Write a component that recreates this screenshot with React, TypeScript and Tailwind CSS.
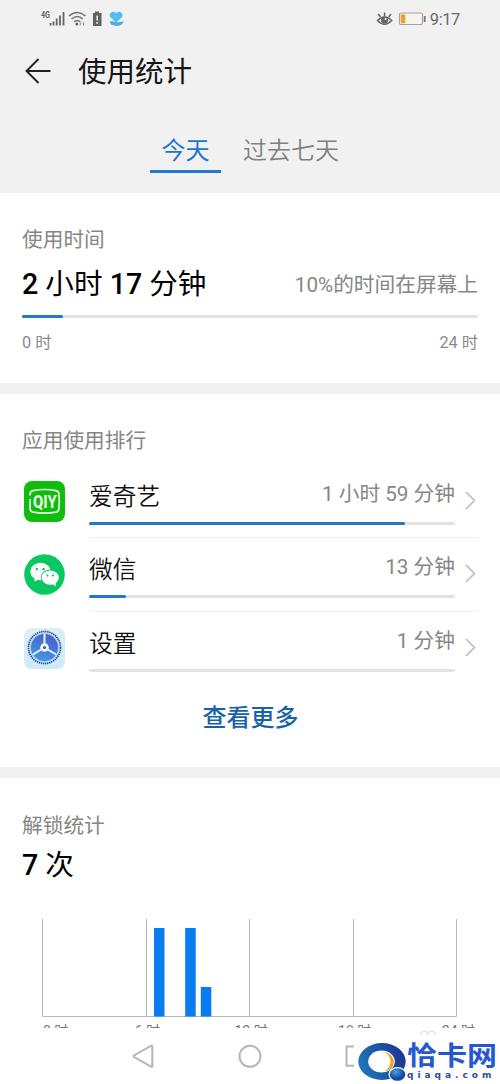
import type { ReactNode } from 'react';

interface AppUsage {
  name: string;
  time: string;
  percent: number;
  icon: ReactNode;
}

function QiyiIcon() {
  return (
    <svg width="41" height="41" viewBox="0 0 41 41">
      <rect width="41" height="41" rx="8" fill="#0fbe0c" />
      <path
        d="M9 9.6Q20.500 7.400 32 9.600Q34.600 10.200 34.900 12.800Q35.600 20.500 34.900 28Q34.600 30.600 32 31.200Q20.500 33 9 31.200Q6.400 30.600 6.100 28V18M6.100 14.500V12.800Q6.400 10.200 9 9.600"
        fill="none"
        stroke="#e9ffe6"
        strokeWidth="1.700"
      />
      <text
        x="20.800"
        y="26.500"
        textAnchor="middle"
        textLength="23.500"
        lengthAdjust="spacingAndGlyphs"
        fill="#f4fff2"
        fontSize="17.500"
        fontWeight="700"
        fontFamily="Roboto, sans-serif"
      >
        QIY
      </text>
    </svg>
  );
}

function WechatIcon() {
  return (
    <svg width="41" height="41" viewBox="0 0 41 41">
      <circle cx="20.500" cy="20.500" r="20.300" fill="#09c862" />
      <ellipse cx="16.500" cy="17.500" rx="10.200" ry="8.700" fill="#fff" />
      <path d="M10.500 22.500L10.500 27.700L15.500 24.800Z" fill="#fff" />
      <ellipse cx="26.200" cy="23.600" rx="9.500" ry="8.200" fill="#09c862" />
      <ellipse cx="26.200" cy="23.600" rx="8.600" ry="7.200" fill="#fff" />
      <path d="M27.500 29.500L31.800 32.400L31.500 27.500Z" fill="#fff" />
      <circle cx="12.900" cy="15" r="1.300" fill="#09c862" />
      <circle cx="19.600" cy="15" r="1.300" fill="#09c862" />
      <circle cx="23.400" cy="21.500" r="1.100" fill="#09c862" />
      <circle cx="29" cy="21.500" r="1.100" fill="#09c862" />
    </svg>
  );
}

function SettingsIcon() {
  return (
    <svg width="41" height="41" viewBox="0 0 41 41">
      <defs>
        <linearGradient id="settings-bg" x1="0" y1="0" x2="0" y2="1">
          <stop offset="0" stopColor="#daeff8" />
          <stop offset="1" stopColor="#cdeafa" />
        </linearGradient>
        <linearGradient id="settings-dial" x1="0.700" y1="0" x2="0.300" y2="1">
          <stop offset="0" stopColor="#4a5bd0" />
          <stop offset="1" stopColor="#3f9be0" />
        </linearGradient>
      </defs>
      <rect width="41" height="41" rx="8" fill="url(#settings-bg)" />
      <circle cx="20.500" cy="19.500" r="16" fill="none" stroke="#35507e" strokeWidth="1.800" strokeDasharray="1.400 0.700" />
      <circle cx="20.500" cy="19.500" r="14.800" fill="#a9cdf5" />
      <circle cx="20.500" cy="19.500" r="13.500" fill="url(#settings-dial)" />
      <path d="M20.500 6V19.500L9 26.500M20.500 19.500L32 26.500" fill="none" stroke="#eaf5ff" strokeWidth="2" />
      <circle cx="20.500" cy="19.500" r="4.300" fill="#eaf5ff" />
      <circle cx="20.500" cy="19.500" r="1.600" fill="#4c6076" />
    </svg>
  );
}

const apps: AppUsage[] = [
  { name: '爱奇艺', time: '1 小时 59 分钟', percent: 86.3, icon: <QiyiIcon /> },
  { name: '微信', time: '13 分钟', percent: 10, icon: <WechatIcon /> },
  { name: '设置', time: '1 分钟', percent: 0, icon: <SettingsIcon /> },
];

// unlock counts: x offset from the left axis and bar height
const unlocks = [
  { x: 112, height: 88.5 },
  { x: 143.2, height: 88.5 },
  { x: 158.8, height: 29.5 },
];

const hours = ['6 时', '12 时', '18 时', '24 时'];

function StatusBar() {
  return (
    <div className="flex h-[38px] items-center justify-between pr-10 pl-10 text-[#6b6b6b]">
      <svg width="86" height="20" viewBox="0 0 86 20">
        <text x="1" y="9" fontSize="8.500" fontWeight="700" fontFamily="Roboto, sans-serif" fill="#666" textLength="9" lengthAdjust="spacingAndGlyphs">
          4G
        </text>
        <path d="M10.500 14V16.500M13.500 12.500V16.500M16.700 9.500V16.500M20 6.500V16.500M23.500 3V16.500" stroke="#666" strokeWidth="1.800" />
        <g fill="none" stroke="#707070" strokeWidth="1.600">
          <path d="M29 7Q37.200 0 45.500 7" />
          <path d="M31.700 10Q37.200 5 42.700 10" />
          <path d="M34.200 12.800Q37.200 10.200 40.200 12.800" />
        </g>
        <circle cx="36.800" cy="15" r="1.500" fill="#666" />
        <path d="M41 13.500L40 16.500M43.500 13.500V16.500" stroke="#888" strokeWidth="1" />
        <path d="M55 2.500H59V4H61.500V17H53V4H55Z" fill="#626262" />
        <path d="M57.200 6.500V11.500M57.200 13V14.800" stroke="#f1f1f1" strokeWidth="1.600" />
        <path d="M76.300 13.500L70.500 8.500C68.300 5.200 71.500 2 74.500 2.900L76.300 4.100L78 2.900C81 2 84 5.200 81.700 8.500Z" fill="#56bdf2" />
        <path d="M69.500 12.500Q74 11.500 76.500 13.200L84 12.500Q82 17 76 17L71 15.500Z" fill="#4dade9" />
      </svg>
      <div className="flex items-center">
        <svg width="50" height="18" viewBox="0 0 50 18" className="mr-[4px]">
          <path d="M1.500 10.500Q8.500 3.500 15.700 10.500Q8.500 18 1.500 10.500Z" fill="none" stroke="#656565" strokeWidth="1.500" />
          <circle cx="8.600" cy="10" r="3.600" fill="#656565" />
          <circle cx="9.600" cy="9" r="1" fill="#f1f1f1" />
          <path d="M8.600 6V2.500M4.500 7L2.300 4M12.700 7L15 4" stroke="#656565" strokeWidth="1.500" />
          <rect x="23.500" y="3" width="23" height="11.500" rx="1.500" fill="#f7f4f0" stroke="#a7a29d" strokeWidth="1.200" />
          <rect x="24.800" y="4.400" width="4.500" height="8.800" fill="#f0a02e" />
          <path d="M48.700 6V12" stroke="#777" strokeWidth="1.800" />
        </svg>
        <span className="pt-px text-[16.500px] leading-[20px] tracking-[-0.400px]">9:17</span>
      </div>
    </div>
  );
}

function Header() {
  return (
    <header className="h-[193px] bg-[#f1f1f1]">
      <StatusBar />
      <div className="flex h-[66px] items-center pl-[25px]">
        <svg width="26" height="26" viewBox="0 0 26 26" fill="none" stroke="#222" strokeWidth="1.900">
          <path d="M25.500 13H1.500M13.500 1L1.500 13L13.500 25" />
        </svg>
        <h1 className="ml-[27px] pt-[3px] text-[28.500px] leading-[40px] text-[#151515]">使用统计</h1>
      </div>
      <div className="flex pt-[29px] pl-[150px] text-[24px] leading-[36px]">
        <div className="h-[40px] w-[71px] border-b-[3px] border-[#2079cb] text-center text-[#1c78cd]">今天</div>
        <div className="ml-[22px] font-[350] text-[#808080]">过去七天</div>
      </div>
    </header>
  );
}

function Bar({ percent }: { percent: number }) {
  return (
    <div className="h-[3px] rounded-full bg-[#e3e3e3]">
      <div className="h-full rounded-full bg-[#2379c6]" style={{ width: `${percent}%` }} />
    </div>
  );
}

function UsageTime() {
  return (
    <section className="h-[190px] px-[22px] pt-[32px]">
      <h2 className="text-[20.700px] leading-[30px] text-[#868686]">使用时间</h2>
      <div className="mt-[9px] flex h-[40px] items-center justify-between">
        <span className="text-[28.600px] leading-[40px] text-black">
          <b className="font-medium">2</b> 小时 <b className="font-medium">17</b> 分钟
        </span>
        <span className="pt-[2px] text-[20.700px] leading-[30px] text-[#868686]">10%的时间在屏幕上</span>
      </div>
      <div className="mt-[11px]">
        <Bar percent={9} />
      </div>
      <div className="mt-[13px] flex justify-between text-[16.300px] leading-[24px] text-[#8a8a8a]">
        <span>0 时</span>
        <span>24 时</span>
      </div>
    </section>
  );
}

function AppRow({ app, last }: { app: AppUsage; last: boolean }) {
  return (
    <div className="flex h-[73.700px]">
      <div className="w-[67px] pt-[16px] pl-[2px]">{app.icon}</div>
      <div className={`flex flex-1 border-b ${last ? 'border-transparent' : 'border-[#f1f1f1]'}`}>
        <div className="w-[366px] pt-[14px]">
          <div className="flex h-[43px] justify-between">
            <span className="text-[23.700px] leading-[36px] font-[350] text-[#111]">{app.name}</span>
            <span className="text-[20.700px] leading-[31px] text-[#868686]">{app.time}</span>
          </div>
          <Bar percent={app.percent} />
        </div>
        <svg width="11" height="19" viewBox="0 0 11 19" className="mt-[26px] ml-[10px]" fill="none" stroke="#bcbcbc" strokeWidth="1.600">
          <path d="M1 1L9.500 9.500L1 18" />
        </svg>
      </div>
    </div>
  );
}

function AppRanking() {
  return (
    <section className="h-[373px] pt-[32px] pr-[21px] pl-[22px]">
      <h2 className="text-[20.700px] leading-[30px] text-[#868686]">应用使用排行</h2>
      <div className="mt-[8.700px]">
        {apps.map((app, i) => (
          <AppRow key={app.name} app={app} last={i === apps.length - 1} />
        ))}
      </div>
      <button className="mx-auto mt-[14px] block text-[24px] leading-[36px] font-medium text-[#1763a8]">查看更多</button>
    </section>
  );
}

function UnlockStats() {
  return (
    <section className="h-[250px] overflow-hidden px-[22px] pt-[33px]">
      <h2 className="text-[20.700px] leading-[30px] text-[#868686]">解锁统计</h2>
      <p className="mt-[4px] text-[28.600px] leading-[40px] text-black">
        <b className="font-medium">7</b> 次
      </p>
      <svg width="418" height="98" viewBox="0 0 418 98" className="mt-[34px] ml-[20px]">
        <path d="M0.500 0V97.500H414.500V0M104.500 0V97M207.500 0V97M311.500 0V97" fill="none" stroke="#b9b9b9" strokeWidth="1" />
        {unlocks.map((bar) => (
          <rect key={bar.x} x={bar.x} y={97.5 - bar.height} width="10.500" height={bar.height} fill="#087cf2" />
        ))}
      </svg>
      <div className="flex w-[478px] pt-[2px] pl-[21px] text-[14px] leading-[24px] text-[#777]">
        <span className="w-[52.500px] shrink-0">0 时</span>
        {hours.map((hour) => (
          <span key={hour} className="w-[103.700px] shrink-0 text-center">
            {hour}
          </span>
        ))}
      </div>
    </section>
  );
}

function NavBar() {
  return (
    <nav className="relative flex h-[56px] items-center bg-white pl-[132px]">
      <svg width="224" height="26" viewBox="0 0 224 26" fill="none" stroke="#b5b5b5" strokeWidth="2">
        <path d="M19.500 2.500L2 12.500Q1 13.200 2 14L19.500 23.800Q20.300 24 20.300 23V3.500Q20.300 2.200 19.500 2.500Z" />
        <circle cx="118" cy="13.300" r="10.500" />
        <path d="M222 3.500H214.500V22.800H222" />
      </svg>
      <svg width="20" height="8" viewBox="0 0 20 8" className="absolute top-[1px] left-[418px]" fill="none" stroke="#e6e6e6" strokeWidth="1.500">
        <path d="M2 6Q4 1.500 7 2Q9 2.500 9.500 5Q11 1.500 14 2Q17 2.500 18 6" />
      </svg>
      <div className="absolute top-[-1px] right-0 flex h-[57px] w-[146px] pl-[3px]">
        <svg width="51" height="42" viewBox="0 0 51 42" className="mt-[15px] shrink-0">
          <defs>
            <linearGradient id="logo-ring" x1="0" y1="0.600" x2="1" y2="0.300">
              <stop offset="0" stopColor="#2276b7" />
              <stop offset="0.500" stopColor="#1957a9" />
              <stop offset="1" stopColor="#20328c" />
            </linearGradient>
            <radialGradient id="logo-dot" cx="0.400" cy="0.300">
              <stop offset="0" stopColor="#42a5dd" />
              <stop offset="1" stopColor="#17499e" />
            </radialGradient>
          </defs>
          <ellipse cx="25" cy="19.500" rx="23.700" ry="18.500" fill="url(#logo-ring)" />
          <ellipse cx="24.500" cy="19.500" rx="13.300" ry="11" fill="#fff" />
          <path d="M25 9.500Q33.500 12 33.500 19.500Q33.500 25.500 27.500 29.500Q37 28 36.800 19Q35.800 11 25 9.500Z" fill="#f5a21c" />
          <ellipse cx="40.500" cy="32.500" rx="9" ry="7.500" fill="#fff" />
          <ellipse cx="40.500" cy="32.500" rx="7.800" ry="6.300" fill="url(#logo-dot)" />
        </svg>
        <div className="-ml-[1px] pt-[13px] text-[#2558d0]">
          <div className="h-[30px] origin-top scale-y-[0.860] text-[30px] leading-[38px] font-bold whitespace-nowrap">恰卡网</div>
          <div className="text-[9px] leading-[10px] font-bold tracking-[4px] whitespace-nowrap text-[#2a4aa5] [font-family:'DejaVu_Sans',sans-serif]">
            qiaqa.com
          </div>
        </div>
      </div>
    </nav>
  );
}

export default function App() {
  return (
    <div className="h-[1084px] w-[500px] overflow-hidden bg-white [font-family:Roboto,'Noto_Sans_CJK_SC',sans-serif]">
      <Header />
      <UsageTime />
      <div className="h-[11px] bg-[#f0f0f0]" />
      <AppRanking />
      <div className="h-[11px] bg-[#f0f0f0]" />
      <UnlockStats />
      <NavBar />
    </div>
  );
}
